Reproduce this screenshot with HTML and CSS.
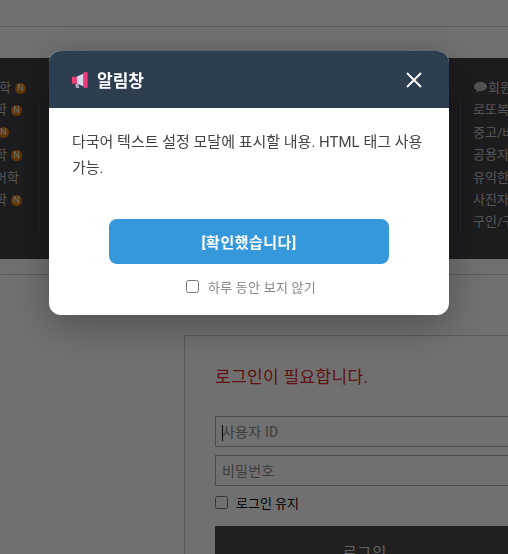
FILE: index.html
```html
<!DOCTYPE html>
<html lang="ko">
<head>
<meta charset="utf-8">
<title>알림창</title>
<link rel="stylesheet" href="styles.css">
</head>
<body>
<div class="page">
  <div class="topbar"></div>
  <div class="band">
    <ul class="menu menu-left">
      <li class="r1">학<span class="new">N</span></li>
      <li class="r2">학<span class="new">N</span></li>
      <li class="r3"><span class="new">N</span></li>
      <li class="r2">학<span class="new">N</span></li>
      <li class="r5">어학</li>
      <li class="r2">학<span class="new">N</span></li>
    </ul>
    <i class="divider divider-left"></i>
    <i class="divider divider-right"></i>
    <ul class="menu menu-right">
      <li><svg class="bubble" viewBox="0 0 13 11" aria-hidden="true"><path d="M6.5 0C10 0 13 1.9 13 4.6S10 9.2 6.5 9.2c-.6 0-1.1 0-1.6-.1L2.6 11l.3-2.7C1.100 7.500 0 6.200 0 4.600 0 1.900 3 0 6.500 0z" fill="#bbb"/></svg>회원</li>
      <li>로또복</li>
      <li>중고/바</li>
      <li>공용자</li>
      <li>유익한</li>
      <li>사진자</li>
      <li>구인/구</li>
    </ul>
  </div>
  <div class="rule"></div>
  <main class="login">
    <p class="notice">로그인이 필요합니다.</p>
    <div class="field"><span class="caret"></span><input class="input" type="text" placeholder="사용자 ID"></div>
    <div class="field"><input class="input" type="text" placeholder="비밀번호"></div>
    <label class="keep"><input class="check" type="checkbox"><span>로그인 유지</span></label>
    <button class="submit" type="button">로그인</button>
  </main>
</div>
<div class="overlay"></div>
<section class="modal">
  <header class="modal-head">
    <svg class="horn" viewBox="0 0 16 16" aria-hidden="true">
      <path d="M3 12h3.400l.9 4H4.200z" fill="#a9a6bd"/>
      <path d="M5 4.600 11.500 1.600V14.400L5 11.400z" fill="#d8d6e6"/>
      <path d="M0 4.800h5v7H0z" fill="#ee3f77"/>
      <rect x="11.600" y="0" width="4" height="16" rx="1.400" fill="#ef3c78"/>
    </svg>
    <h2 class="modal-title">알림창</h2>
    <svg class="close" viewBox="0 0 16 16" aria-hidden="true"><path d="M1 1 15 15M15 1 1 15" stroke="#fff" stroke-width="1.900" fill="none"/></svg>
  </header>
  <div class="modal-body">
    <p class="message">다국어 텍스트 설정 모달에 표시할 내용. HTML 태그 사용 가능.</p>
    <button class="confirm" type="button">[확인했습니다]</button>
    <label class="skip"><input class="check" type="checkbox"><span>하루 동안 보지 않기</span></label>
  </div>
</section>
</body>
</html>
```
FILE: styles.css
```css
* { box-sizing: border-box; }
html, body { margin: 0; height: 100%; overflow: hidden; background: #fff; }
body { font-family: Roboto, "Noto Sans CJK KR", sans-serif; }
.page { width: 508px; height: 554px; overflow: hidden; }
.topbar { height: 27px; border-bottom: 1px solid #ccc; margin-bottom: 31px; }
.band { position: relative; height: 201px; background: #413f44; display: flex; justify-content: space-between; }
.menu { list-style: none; margin: 0; padding: 19px 0 0; font-size: 13px; line-height: 22.4px; color: #c4c4c4; }
.menu-left { width: 38px; overflow: hidden; }
.menu-left li { display: flex; justify-content: flex-end; align-items: center; white-space: nowrap; height: 22.4px; }
.menu-left .r1 { margin-right: 12px; }
.menu-left .r2 { margin-right: 16px; }
.menu-left .r3 { margin-right: 29px; }
.menu-left .r5 { margin-right: 19px; }
.new { flex: none; width: 11px; height: 11px; border-radius: 50%; margin-left: 4px; background: #e07a10; color: #fff; font-size: 9px; line-height: 11px; text-align: center; }
.divider { position: absolute; top: 44px; width: 1px; height: 130px; background: #5a5860; }
.divider-left { left: 38px; }
.divider-right { left: 460px; }
.menu-right { width: 35px; overflow: hidden; white-space: nowrap; }
.menu-right li { height: 22.4px; }
.bubble { display: inline-block; vertical-align: -1px; width: 13px; height: 11px; margin: 0 1px 0 1px; }
.rule { height: 1px; margin-top: 15px; background: #ccc; }
.login { width: 360px; margin: 60px 0 0 184px; padding: 28px 30px 0; border: 1px solid #ccc; }
.notice { margin: 0 0 26px; font-size: 17px; line-height: 26px; letter-spacing: .35px; color: #dc2a2a; }
.field { position: relative; margin-bottom: 8px; }
.input { display: block; width: 100%; height: 31px; padding: 0 6px; border: 1px solid #aaa; background: #fff; border-radius: 0; font: 14px Roboto, "Noto Sans CJK KR", sans-serif; outline: 0; letter-spacing: .2px; }
.input::placeholder { color: #8d8d8d; opacity: 1; }
.caret { position: absolute; left: 7px; top: 9px; width: 1px; height: 16px; background: #000; }
.keep { display: flex; align-items: center; gap: 8px; height: 14px; margin: 9px 0 17px; font-size: 13px; color: #000; }
.check { width: 13px; height: 13px; margin: 0; appearance: auto; flex: none; }
.submit { display: block; width: 300px; height: 50px; border: 0; background: #4c4c4c; color: #ddd; font: 15px Roboto, "Noto Sans CJK KR", sans-serif; letter-spacing: 1px; }
.overlay { position: fixed; inset: 0; background: rgba(0,0,0,.56); }
.modal { position: fixed; left: 49px; top: 51px; width: 400px; height: 264px; border-radius: 12px; overflow: hidden; background: #fff; box-shadow: 0 10px 40px rgba(0,0,0,.3); }
.modal-head { height: 57px; background: #2c3e50; display: flex; align-items: center; padding: 0 27px 0 23px; }
.horn { width: 16px; height: 16px; flex: none; margin-right: 9px; }
.modal-title { margin: 0; font-size: 17px; font-weight: 700; color: #fff; flex: 1; }
.close { width: 16px; height: 16px; flex: none; }
.modal-body { padding: 21px 23px 0; display: flex; flex-direction: column; align-items: center; }
.message { margin: 0 0 38px; width: 100%; font-size: 15px; line-height: 26px; color: #444; }
.confirm { width: 280px; height: 45px; border: 0; border-radius: 8px; background: #3498db; color: #fff; font: 700 15px Roboto, "Noto Sans CJK KR", sans-serif; letter-spacing: .5px; }
.skip { display: flex; align-items: center; gap: 9px; margin-top: 14px; padding-left: 4px; height: 16px; font-size: 13px; letter-spacing: .25px; color: #888; }
```
